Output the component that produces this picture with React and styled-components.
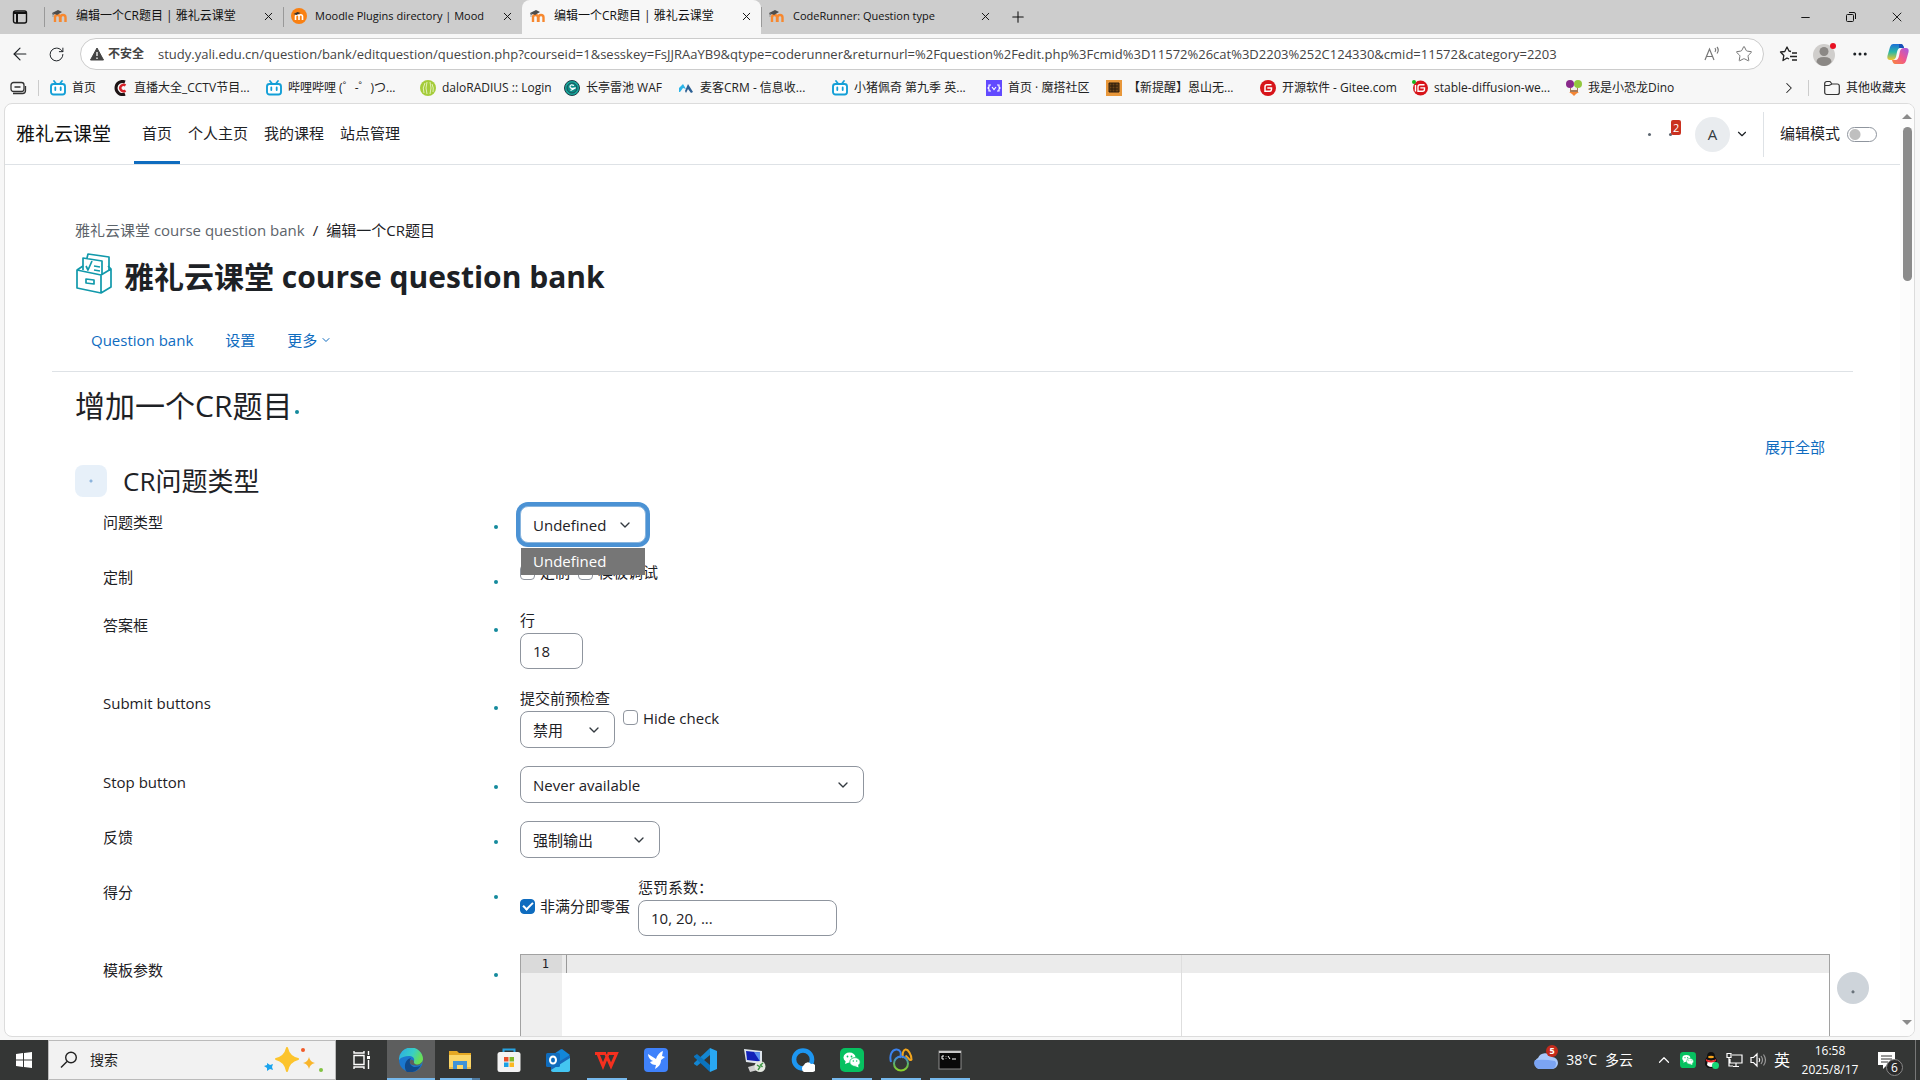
import React, { useState } from "react";
import styled, { createGlobalStyle } from "styled-components";
import {
  ArrowLeft,
  ChevronDown,
  ChevronRight,
  ChevronUp,
  Ellipsis,
  Minus,
  Plus,
  RotateCw,
  Star,
  X,
} from "lucide-react";

const FAVICONS = {
  moodle: (
    <svg width="16" height="16" viewBox="0 0 16 16">
      <path
        d="M3 14V9.500a2.500 2.500 0 0 1 5 0V14M8.500 14V9.500a2.500 2.500 0 0 1 5 0V14"
        fill="none"
        stroke="#f7882f"
        strokeWidth="2.400"
      />
      <path d="M0 5l6-3 4 2-5 3-2-1-2 1z" fill="#4d4d4d" />
      <path d="M1 5v4" stroke="#8a8a8a" strokeWidth="0.800" />
    </svg>
  ),
  moodleOrg: (
    <svg width="16" height="16" viewBox="0 0 16 16">
      <circle cx="8" cy="8" r="8" fill="#f98012" />
      <path
        d="M4.500 12V8.500a1.700 1.700 0 0 1 3.500 0V12M8 12V8.500a1.700 1.700 0 0 1 3.500 0V12"
        fill="none"
        stroke="#fff"
        strokeWidth="1.600"
      />
      <path d="M2.500 6l4-2 3 1-4 2z" fill="#333" />
    </svg>
  ),
  bili: (
    <svg width="16" height="16" viewBox="0 0 16 16">
      <path d="M4 1l2 2.500M12 1l-2 2.500" stroke="#139fd7" strokeWidth="1.700" strokeLinecap="round" />
      <rect x="1" y="4" width="14" height="10.500" rx="2.500" fill="#fff" stroke="#139fd7" strokeWidth="1.900" />
      <path d="M5.300 7.500v2.500M10.700 7.500v2.500" stroke="#139fd7" strokeWidth="1.800" strokeLinecap="round" />
    </svg>
  ),
  cctv: (
    <svg width="16" height="16" viewBox="0 0 16 16" fill="none">
      <path d="M13 2a6.500 6.500 0 1 0 0 12" stroke="#1d1415" strokeWidth="3" />
      <path d="M13.500 5.500a3.200 3.200 0 1 0 0 5" stroke="#d8232a" strokeWidth="2.400" />
    </svg>
  ),
  radius: (
    <svg width="16" height="16" viewBox="0 0 16 16">
      <circle cx="8" cy="8" r="8" fill="#a5cc3a" />
      <path d="M4 13q-2-5 1-10M7 14q-2-6 0-12M10 14q2-6 0-12M13 12q1-4-1-8" fill="none" stroke="#e9f5c6" strokeWidth="0.900" />
    </svg>
  ),
  safeline: (
    <svg width="16" height="16" viewBox="0 0 16 16">
      <circle cx="8" cy="8" r="7.500" fill="#14a79b" stroke="#233b45" />
      <circle cx="8" cy="8" r="5" fill="#0d8c87" stroke="#1e4d56" />
      <path d="M10 5.500q-4-1.500-4 1t4 1.500-3.500 2.500" fill="none" stroke="#fff" strokeWidth="1.200" />
    </svg>
  ),
  mike: (
    <svg width="16" height="16" viewBox="0 0 16 16">
      <path d="M1 12V8l4-4 3 5-3-1-3 4z" fill="#2bb5e9" />
      <path d="M7 11l3-7 5 8-2 1-3-4-2 4z" fill="#2c5f93" />
    </svg>
  ),
  modelscope: (
    <svg width="16" height="16" viewBox="0 0 16 16">
      <rect width="16" height="16" fill="#624aff" />
      <path d="M5 5H3v2l-1 1 1 1v2h2M11 5h2v2l1 1-1 1v2h-2M6 7l2 2.500L10 7" fill="none" stroke="#fff" strokeWidth="1.200" />
    </svg>
  ),
  enshan: (
    <svg width="16" height="16" viewBox="0 0 16 16">
      <rect width="16" height="16" fill="#e8973a" />
      <path d="M3 3h10v9H3zM4 6h8M4 9h8M6 3v9M9 3v9" fill="#6b4316" stroke="#2c1c0c" />
    </svg>
  ),
  gitee: (
    <svg width="16" height="16" viewBox="0 0 16 16">
      <circle cx="8" cy="8" r="8" fill="#d7141a" />
      <path d="M11.500 4.700H7a2 2 0 0 0-2 2v4.600h4.500a2 2 0 0 0 2-2V7.900H7.300" fill="none" stroke="#fff" strokeWidth="1.500" />
    </svg>
  ),
  igitee: (
    <svg width="16" height="16" viewBox="0 0 16 16">
      <circle cx="8.500" cy="8" r="7.500" fill="#d7141a" />
      <path d="M12.500 4.700H8a2 2 0 0 0-2 2v4.600h4.500a2 2 0 0 0 2-2V7.900H8.300M3.500 5v6.500" fill="none" stroke="#fff" strokeWidth="1.400" />
      <circle cx="2" cy="2" r="2" fill="#16b31d" />
    </svg>
  ),
  dino: (
    <svg width="16" height="16" viewBox="0 0 16 16">
      <circle cx="4" cy="4" r="4" fill="#8a2a8c" />
      <circle cx="12" cy="4" r="4" fill="#93c83e" />
      <path d="M4 8h8v4H4z" fill="#a87b57" />
      <path d="M5 8h6v2H5z" fill="#f4efe8" />
      <path d="M3 12h10l-3 2-2 2-2-2z" fill="#f58634" />
    </svg>
  ),
};

const TABS = [
  { icon: "moodle", title: "编辑一个CR题目 | 雅礼云课堂" },
  { icon: "moodleOrg", title: "Moodle Plugins directory | Mood", latin: true },
  { icon: "moodle", title: "编辑一个CR题目 | 雅礼云课堂", active: true },
  { icon: "moodle", title: "CodeRunner: Question type", latin: true },
];

const BOOKMARKS = [
  { icon: "bili", title: "首页", width: 62 },
  { icon: "cctv", title: "直播大全_CCTV节目...", width: 154 },
  { icon: "bili", title: "哔哩哔哩 (゜-゜)つ...", width: 154 },
  { icon: "radius", title: "daloRADIUS :: Login", width: 144 },
  { icon: "safeline", title: "长亭雷池 WAF", width: 114 },
  { icon: "mike", title: "麦客CRM - 信息收...", width: 154 },
  { icon: "bili", title: "小猪佩奇 第九季 英...", width: 154 },
  { icon: "modelscope", title: "首页 · 魔搭社区", width: 120 },
  { icon: "enshan", title: "【新提醒】恩山无...", width: 154 },
  { icon: "gitee", title: "开源软件 - Gitee.com", width: 152 },
  { icon: "igitee", title: "stable-diffusion-we...", width: 154 },
  { icon: "dino", title: "我是小恐龙Dino", width: 130 },
];

const WechatIcon = ({ size }) => (
  <svg width={size} height={size} viewBox="0 0 24 24">
    <rect width="24" height="24" rx="5" fill="#07c160" />
    <ellipse cx="9.500" cy="9.500" rx="6" ry="5" fill="#fff" />
    <path d="M5 16l1-4 4 2z" fill="#fff" />
    <ellipse cx="15" cy="14" rx="5.200" ry="4.400" fill="#fff" stroke="#07c160" strokeWidth="0.800" />
    <path d="M18.500 19.500l-.5-3-3 1.500z" fill="#fff" />
    <circle cx="7.500" cy="8.500" r="0.900" fill="#07c160" />
    <circle cx="11.500" cy="8.500" r="0.900" fill="#07c160" />
    <circle cx="13.300" cy="13" r="0.700" fill="#07c160" />
    <circle cx="16.700" cy="13" r="0.700" fill="#07c160" />
  </svg>
);

const TASKS = [
  {
    name: "任务视图",
    icon: (
      <svg width="24" height="24" viewBox="0 0 24 24" fill="none" stroke="#fff" strokeWidth="1.400">
        <path d="M4 7.500h10v9H4zM4 3v2h10V3M4 21v-2h10v2M18.500 3v4M18.500 12v9" />
        <path d="M17 8h3v3h-3z" fill="#fff" stroke="none" />
      </svg>
    ),
  },
  {
    name: "Microsoft Edge",
    state: "active",
    icon: (
      <svg width="24" height="24" viewBox="0 0 24 24">
        <defs>
          <linearGradient id="edgeTop" x1="0" y1="0" x2="1" y2="0.400">
            <stop offset="0" stopColor="#2aa9e8" />
            <stop offset="0.600" stopColor="#38cfc5" />
            <stop offset="1" stopColor="#6adf54" />
          </linearGradient>
        </defs>
        <circle cx="12" cy="12" r="12" fill="#1b78cf" />
        <path d="M0 12A12 12 0 0 1 24 11c0 4-3 6-6 6s-4-2-3-4c1-3-2-5-5-5-4 0-8 1-10 4z" fill="url(#edgeTop)" />
        <path d="M8 24C4 20 6 11 12 10c-3 4 0 9 4 9 3 0 5-1 6-2-3 6-8 8-14 7z" fill="#114a8b" />
        <path d="M24 12c0 3-3 5.500-6 5.500s-5-1-4-4.500c1 3 3 4 5 3.500s4-2 5-4.500z" fill="#5d5e5e" />
        <path d="M11 13q1-3 4 0c-1 2 0 4 3 4-5 1-8-1-7-4z" fill="#5d5e5e" />
      </svg>
    ),
  },
  {
    name: "文件资源管理器",
    state: "stack",
    icon: (
      <svg width="24" height="24" viewBox="0 0 24 24">
        <path d="M1 3h8l2 2h12v15H1z" fill="#e5a823" />
        <path d="M1 7h22v14H1z" fill="#fbd668" />
        <path d="M5 13h14v8h-4v-4H9v4H5z" fill="#3f93d8" />
        <path d="M1 19h4v2H1zM19 19h4v2h-4z" fill="#e9bc4c" />
      </svg>
    ),
  },
  {
    name: "Microsoft Store",
    icon: (
      <svg width="24" height="24" viewBox="0 0 24 24">
        <path d="M6.500 5V1.500h11V5" fill="none" stroke="#27a3e2" strokeWidth="2" />
        <rect x="0.500" y="4" width="23" height="20" rx="2.500" fill="#f3f3f3" />
        <path d="M7 9h4.500v4.500H7z" fill="#e8502b" />
        <path d="M12.500 9H17v4.500h-4.500z" fill="#80b82a" />
        <path d="M7 14.500h4.500V19H7z" fill="#1aa1e4" />
        <path d="M12.500 14.500H17V19h-4.500z" fill="#fbb921" />
      </svg>
    ),
  },
  {
    name: "Outlook",
    icon: (
      <svg width="24" height="24" viewBox="0 0 24 24">
        <path d="M5 8l10-7 9 7v15H5z" fill="#1767b8" />
        <path d="M8 6l8-5 8 6-10 6z" fill="#1287d9" />
        <path d="M5 22l19-12v12a2 2 0 0 1-2 2H7a2 2 0 0 1-2-2z" fill="#44c5f1" />
        <rect y="5" width="14" height="14" rx="1.500" fill="#0f6cbd" />
        <ellipse cx="7" cy="12" rx="3" ry="3.500" fill="none" stroke="#fff" strokeWidth="2" />
      </svg>
    ),
  },
  {
    name: "WPS Office",
    state: "open",
    icon: (
      <svg width="24" height="24" viewBox="0 0 24 24" fill="none" stroke="#f5301f" strokeWidth="3">
        <path d="M0 5.500h11M3 6l5 12 5-12M11 6.500l5 11.500 5.500-12.500h-9" />
      </svg>
    ),
  },
  {
    name: "Bird",
    icon: (
      <svg width="24" height="24" viewBox="0 0 24 24">
        <rect width="24" height="24" rx="4" fill="#3f82fb" />
        <path d="M4 6l8 5c1-4 4-7 7-8l-1 5 3 1-4 3c0 5-3 7-6 9l1-4c-3 0-5-1-6-3l3-1c-3-1-5-4-5-7z" fill="#fff" />
      </svg>
    ),
  },
  {
    name: "Visual Studio Code",
    icon: (
      <svg width="24" height="24" viewBox="0 0 24 24">
        <path d="M17 0l7 3v18l-7 3z" fill="#29a8f2" />
        <path d="M17 0v7L4 18l-3-2v-1z" fill="#1486d1" />
        <path d="M17 24v-7L4 6 1 8v1z" fill="#0b74be" />
      </svg>
    ),
  },
  {
    name: "远程桌面",
    icon: (
      <svg width="24" height="24" viewBox="0 0 24 24">
        <path d="M2 1l18 2v13L4 14z" fill="#dfe5ec" />
        <path d="M4 3l14 1.500v9L5 12z" fill="#1120b8" />
        <path d="M12 4l6 .5v9z" fill="#5a92ef" />
        <path d="M6 19l11-3 3 5-12 3z" fill="#cfcfcf" />
        <circle cx="18" cy="18.500" r="5.500" fill="#e4e8e0" />
        <path d="M15 17l3 2-2 3M21 15l-2.500 2 2 2" fill="none" stroke="#3a9440" strokeWidth="1.400" />
      </svg>
    ),
  },
  {
    name: "QQ浏览器",
    icon: (
      <svg width="24" height="24" viewBox="0 0 24 24">
        <circle cx="12" cy="11.500" r="9" fill="none" stroke="#1d96f1" strokeWidth="4.600" />
        <path d="M13 24a4 4 0 0 1 0-7 4 4 0 0 1 7-1 4 4 0 0 1 2 8z" fill="#fff" />
      </svg>
    ),
  },
  { name: "微信", state: "open", icon: <WechatIcon size={24} /> },
  {
    name: "Navicat",
    state: "open",
    icon: (
      <svg width="24" height="24" viewBox="0 0 24 24" fill="none" strokeWidth="2">
        <defs>
          <linearGradient id="navicatRing" x1="0" y1="0" x2="0" y2="1">
            <stop offset="0" stopColor="#3b82ee" />
            <stop offset="0.600" stopColor="#63b858" />
            <stop offset="1" stopColor="#8ad02c" />
          </linearGradient>
        </defs>
        <path d="M2 14C0 7 3 2 7 1.500s6 3.500 4 8.500" stroke="#3b82ee" />
        <path d="M14 10c-1-4 0-8 2.500-8.500s6 5 6 10c-2 2-3-2-6-4" stroke="#f4a61d" />
        <circle cx="12" cy="15.500" r="7" stroke="url(#navicatRing)" />
      </svg>
    ),
  },
  {
    name: "命令提示符",
    state: "open",
    icon: (
      <svg width="24" height="24" viewBox="0 0 24 24">
        <rect x="1" y="3" width="22" height="18" fill="#090909" stroke="#8c8c8c" />
        <path d="M1 3h22v2H1z" fill="#c9c9c9" />
        <path d="M6 8H4v3h2M8 8v.5M8 10.500v.5M10 8l2 3M14 11h4" fill="none" stroke="#fff" />
      </svg>
    ),
  },
];

const Row = ({ label, htmlFor, children }) => (
  <FormRow>
    <RowLabel>
      <label htmlFor={htmlFor}>{label}</label>
      <HelpDot type="button" aria-label="帮助" />
    </RowLabel>
    <Controls>{children}</Controls>
  </FormRow>
);

const Select = ({ id, width, focused, options, children }) => (
  <SelectWrap $width={width} $focused={focused}>
    <select id={id}>
      {options.map((option) => (
        <option key={option}>{option}</option>
      ))}
    </select>
    <ChevronDown size={16} strokeWidth={2} />
    {children}
  </SelectWrap>
);

const BrowserChrome = () => (
  <header>
    <TabStrip>
      <TabActions type="button" aria-label="标签页操作">
        <svg width="16" height="16" viewBox="0 0 16 16" fill="none" stroke="#111" strokeWidth="1.400">
          <rect x="1.500" y="2" width="13" height="12" rx="2" />
          <path d="M1.500 4h13M5 5v9" strokeWidth="2" />
        </svg>
      </TabActions>
      {TABS.map((tab, index) => (
        <Tab key={index} $active={tab.active} $latin={tab.latin}>
          {FAVICONS[tab.icon]}
          <span>{tab.title}</span>
          <button type="button" aria-label="关闭标签页">
            <X size={13} strokeWidth={1.8} />
          </button>
        </Tab>
      ))}
      <IconButton type="button" aria-label="新建标签页" $width={36}>
        <Plus size={18} strokeWidth={1.4} />
      </IconButton>
      <WindowButtons>
        <IconButton type="button" aria-label="最小化" $width={46}>
          <Minus size={13} strokeWidth={1.8} />
        </IconButton>
        <IconButton type="button" aria-label="还原" $width={46}>
          <svg width="12" height="12" viewBox="0 0 12 12" fill="none" stroke="#111">
            <rect x="1.500" y="3.500" width="7" height="7" rx="1" />
            <path d="M4 1.500h5a1.500 1.500 0 0 1 1.500 1.500v5" />
          </svg>
        </IconButton>
        <IconButton type="button" aria-label="关闭" $width={46}>
          <X size={16} strokeWidth={1.4} />
        </IconButton>
      </WindowButtons>
    </TabStrip>

    <Toolbar>
      <IconButton type="button" aria-label="后退" $width={36}>
        <ArrowLeft size={20} strokeWidth={1.4} />
      </IconButton>
      <IconButton type="button" aria-label="刷新" $width={36}>
        <RotateCw size={17} strokeWidth={1.4} />
      </IconButton>
      <AddressBar>
        <svg width="14" height="14" viewBox="0 0 14 14">
          <path d="M7 1l6.500 12H.5z" fill="#444" stroke="#444" strokeLinejoin="round" />
          <path d="M7 5v4M7 10.500V12" stroke="#fff" strokeWidth="1.300" />
        </svg>
        <strong>不安全</strong>
        <input
          aria-label="地址"
          readOnly
          value="study.yali.edu.cn/question/bank/editquestion/question.php?courseid=1&sesskey=FsJJRAaYB9&qtype=coderunner&returnurl=%2Fquestion%2Fedit.php%3Fcmid%3D11572%26cat%3D2203%252C124330&cmid=11572&category=2203"
        />
        <svg width="18" height="18" viewBox="0 0 18 18" fill="none" stroke="#777" strokeWidth="1.200">
          <path d="M2 15L6.500 4 11 15M3.500 11.500h6M12 3q1.500 2 0 4M14 2q2.500 3 0 6.500" />
        </svg>
        <Star size={18} strokeWidth={1.2} color="#666" />
      </AddressBar>
      <IconButton type="button" aria-label="收藏夹" $width={36}>
        <svg width="19" height="19" viewBox="0 0 19 19" fill="none" stroke="#222" strokeWidth="1.300" strokeLinejoin="round">
          <path d="M12 6.500L10 6 8 2 5.800 6.500 1.500 7 4.800 10.500 4 15.500 8 13l2 1" />
          <path d="M13 8h5M11 11.500h7M13 15h5" />
        </svg>
      </IconButton>
      <IconButton type="button" aria-label="个人资料" $width={36}>
        <svg width="24" height="24" viewBox="0 0 24 24">
          <circle cx="12" cy="13" r="11" fill="#d0cecc" />
          <circle cx="12" cy="9.500" r="4.500" fill="#8b8885" />
          <path d="M4.500 20q0-5 7.500-5t7.500 5q-3 4-7.500 4t-7.500-4z" fill="#8b8885" />
          <circle cx="21" cy="4" r="3" fill="#e81123" />
        </svg>
      </IconButton>
      <IconButton type="button" aria-label="设置及其他" $width={36}>
        <Ellipsis size={18} />
      </IconButton>
      <IconButton type="button" aria-label="Copilot" $width={40}>
        <svg width="22" height="22" viewBox="0 0 22 22">
          <defs>
            <linearGradient id="copilotA" x1="0" y1="0" x2="0" y2="1">
              <stop offset="0" stopColor="#1b6fd8" />
              <stop offset="0.500" stopColor="#29b8a6" />
              <stop offset="1" stopColor="#f4c729" />
            </linearGradient>
            <linearGradient id="copilotB" x1="1" y1="0" x2="0" y2="1">
              <stop offset="0" stopColor="#a259e6" />
              <stop offset="0.500" stopColor="#f0578d" />
              <stop offset="1" stopColor="#f9893a" />
            </linearGradient>
          </defs>
          <path d="M6 1h8q2 0 3 4h-4q-2 0-3 4l-1 5q-1 3-4 3H3q-4 0-2-6l2-7q1-3 3-3z" fill="url(#copilotA)" />
          <path d="M16 21H8q-2 0-3-4h4q2 0 3-4l1-5q1-3 4-3h2q4 0 2 6l-2 7q-1 3-3 3z" fill="url(#copilotB)" />
          <path d="M12 1h2q2 0 3 4h-5z" fill="#1750b8" />
        </svg>
      </IconButton>
    </Toolbar>

    <BookmarkBar>
      <IconButton type="button" aria-label="工作区" $width={36}>
        <svg width="18" height="16" viewBox="0 0 18 16" fill="none" stroke="#333" strokeWidth="1.300">
          <rect x="2" y="2.500" width="13" height="9" rx="2.500" />
          <path d="M5.500 7h6M4 13.500h9.500a3 3 0 0 0 3-3V6" />
        </svg>
      </IconButton>
      <BarDivider />
      <Bookmarks>
        {BOOKMARKS.map((mark, index) => (
          <Bookmark key={index} href="#" $width={mark.width}>
            {FAVICONS[mark.icon]}
            <span>{mark.title}</span>
          </Bookmark>
        ))}
      </Bookmarks>
      <IconButton type="button" aria-label="更多收藏" $width={34}>
        <ChevronRight size={18} strokeWidth={1.4} />
      </IconButton>
      <BarDivider />
      <OtherBookmarks href="#">
        <svg width="16" height="16" viewBox="0 0 16 16" fill="none" stroke="#333" strokeWidth="1.200">
          <path d="M.7 12.500v-9a2 2 0 0 1 2-2H6l2 2.500h5.300a2 2 0 0 1 2 2v6.500a2 2 0 0 1-2 2H2.700a2 2 0 0 1-2-2zM.7 5.500H5L8 4" />
        </svg>
        <span>其他收藏夹</span>
      </OtherBookmarks>
    </BookmarkBar>
  </header>
);

const SiteNav = () => (
  <Navbar>
    <Brand href="#">雅礼云课堂</Brand>
    <NavLink href="#" $active>
      首页
    </NavLink>
    <NavLink href="#">个人主页</NavLink>
    <NavLink href="#">我的课程</NavLink>
    <NavLink href="#">站点管理</NavLink>
    <NavTools>
      <NavDot type="button" aria-label="通知" />
      <NavDot type="button" aria-label="消息">
        <Badge>2</Badge>
      </NavDot>
      <UserMenu type="button">
        <span>A</span>
        <ChevronDown size={14} />
      </UserMenu>
      <EditMode>
        <label htmlFor="editmode">编辑模式</label>
        <Switch id="editmode" type="checkbox" role="switch" />
      </EditMode>
    </NavTools>
  </Navbar>
);

const QuestionForm = () => {
  const [custom, setCustom] = useState(false);
  const [debug, setDebug] = useState(false);
  const [hideCheck, setHideCheck] = useState(false);
  const [allOrNothing, setAllOrNothing] = useState(true);

  return (
    <form>
      <Row label="问题类型" htmlFor="qtype">
        <Select id="qtype" width={126} focused options={["Undefined"]}>
          <OptionList>
            <li>Undefined</li>
          </OptionList>
        </Select>
      </Row>
      <Row label="定制">
        <CheckLine>
          <Check>
            <input type="checkbox" checked={custom} onChange={(e) => setCustom(e.target.checked)} />
            定制
          </Check>
          <Check>
            <input type="checkbox" checked={debug} onChange={(e) => setDebug(e.target.checked)} />
            模板调试
          </Check>
        </CheckLine>
      </Row>
      <Row label="答案框">
        <Field>
          <label htmlFor="lines">行</label>
          <TextInput id="lines" $width={63} defaultValue="18" />
        </Field>
      </Row>
      <Row label="Submit buttons">
        <Field>
          <label htmlFor="precheck">提交前预检查</label>
          <Select id="precheck" width={95} options={["禁用"]} />
        </Field>
        <Check>
          <input type="checkbox" checked={hideCheck} onChange={(e) => setHideCheck(e.target.checked)} />
          Hide check
        </Check>
      </Row>
      <Row label="Stop button" htmlFor="giveup">
        <Select id="giveup" width={344} options={["Never available"]} />
      </Row>
      <Row label="反馈" htmlFor="feedback">
        <Select id="feedback" width={140} options={["强制输出"]} />
      </Row>
      <Row label="得分">
        <Check>
          <input type="checkbox" checked={allOrNothing} onChange={(e) => setAllOrNothing(e.target.checked)} />
          非满分即零蛋
        </Check>
        <Field>
          <label htmlFor="penalty">惩罚系数：</label>
          <TextInput id="penalty" $width={199} defaultValue="10, 20, ..." />
        </Field>
      </Row>
      <Row label="模板参数" htmlFor="params">
        <Editor>
          <Gutter>1</Gutter>
          <Caret />
          <textarea id="params" />
        </Editor>
      </Row>
    </form>
  );
};

const Taskbar = () => (
  <TaskbarWrap>
    <StartButton type="button" aria-label="开始">
      <svg width="16" height="16" viewBox="0 0 16 16" fill="#fff">
        <path d="M0 2l7-1v6.500H0zM8 1l8-1v7.500H8zM0 8.500h7V15l-7-1zM8 8.500h8V16l-8-1z" />
      </svg>
    </StartButton>
    <SearchBox>
      <svg width="18" height="18" viewBox="0 0 18 18" fill="none" stroke="#222" strokeWidth="1.400">
        <circle cx="11" cy="6.500" r="5.300" />
        <path d="M7 10.500L1 16.500" />
      </svg>
      <input aria-label="搜索" placeholder="搜索" />
      <svg width="62" height="26" viewBox="0 0 62 26">
        <path d="M24 1q2 9 11 11-9 2-11 12-2-10-11-12 9-2 11-11z" fill="#fcc42d" stroke="#fcc42d" strokeWidth="2" strokeLinejoin="round" />
        <path d="M46 10q1 5 6 6-5 1-6 6-1-5-6-6 5-1 6-6z" fill="#f9b52b" />
        <path d="M4 16l3 2 3-1-1 3 1 3-3-1-3 2v-3l-3-2 3-1z" fill="#1ba4ed" />
        <circle cx="40" cy="3" r="2" fill="#f15a29" />
        <circle cx="58" cy="23" r="2" fill="#82c341" />
      </svg>
    </SearchBox>
    <Tasks>
      {TASKS.map((task) => (
        <Task key={task.name} type="button" aria-label={task.name} $state={task.state}>
          {task.icon}
        </Task>
      ))}
    </Tasks>
    <Weather type="button">
      <WeatherIcon>
        <svg width="25" height="18" viewBox="0 0 25 18">
          <path d="M6 18a6 6 0 0 1-1-11 8 8 0 0 1 14-1 6 6 0 0 1 0 12z" fill="#a9c8fb" />
          <path d="M6 18a6 6 0 0 1-4-9q10-1 20 1 3 4-2 8z" fill="#7ba4f3" />
        </svg>
        <i>5</i>
      </WeatherIcon>
      <span>38°C</span>
      <span>多云</span>
    </Weather>
    <Tray>
      <ChevronUp size={18} strokeWidth={1.6} />
      <WechatIcon size={16} />
      <svg width="16" height="17" viewBox="0 0 16 17">
        <path d="M2 13q0-7 2-8 0-5 4-5t4 5q2 1 2 8l-3 3H5z" fill="#111" />
        <path d="M5 8q3 2 6 0l1 5q-4 4-8 0z" fill="#fff" />
        <path d="M3 7q5 3 10 0v2q-5 3-10 0z" fill="#e4252a" />
        <ellipse cx="8" cy="5" rx="3" ry="1.300" fill="#f9a51a" />
        <circle cx="12.500" cy="13.500" r="3.500" fill="#16d978" />
      </svg>
      <svg width="17" height="16" viewBox="0 0 17 16" fill="none" stroke="#fff" strokeWidth="1.200">
        <path d="M6 3h10v8H4V7M7 14.500h6M10 11v3M1 1.500h4v4H1zM3 6v8h4" />
      </svg>
      <svg width="17" height="16" viewBox="0 0 17 16" fill="none" stroke="#fff" strokeWidth="1.200">
        <path d="M1 5.500h2.500L7 2v12l-3.500-3.500H1zM9 6q1.500 2 0 4" />
        <path d="M11 4q3 4 0 8M13.500 2.500q4 5.500 0 11" stroke="#999" />
      </svg>
      <Ime>英</Ime>
    </Tray>
    <Clock>
      <time>16:58</time>
      <time>2025/8/17</time>
    </Clock>
    <Notices type="button" aria-label="通知中心">
      <svg width="17" height="17" viewBox="0 0 17 17">
        <path d="M0 0h17v13H9l-4 4v-4H0z" fill="#fff" />
        <path d="M3 4h11M3 7h11M3 10h7" stroke="#333" />
      </svg>
      <i>6</i>
    </Notices>
  </TaskbarWrap>
);

const App = () => {
  return (
    <Desktop>
      <GlobalStyle />
      <BrowserChrome />
      <Viewport>
        <Page>
          <SiteNav />
          <Main>
            <Breadcrumb aria-label="导航栏">
              <a href="#">雅礼云课堂 course question bank</a>
              <span>/</span>
              <span>编辑一个CR题目</span>
            </Breadcrumb>
            <TitleRow>
              <svg width="38" height="42" viewBox="0 0 38 42" fill="none" stroke="#1199ab" strokeWidth="1.700" strokeLinejoin="round">
                <path d="M2 17l24 5v18L2 35zM26 22l10-6v18l-10 6M2 17l6-4M36 16l-3-3" />
                <path d="M8 17V5l19 3v13M12 5l1-4 21 3v14M11 26l8 1v4l-8-1z" />
                <path d="M11 13l2 4 4-9M19 13l6 1M19 17l6 1" />
              </svg>
              <h1>雅礼云课堂 course question bank</h1>
            </TitleRow>
            <SubNav>
              <a href="#">Question bank</a>
              <a href="#">设置</a>
              <a href="#">
                更多
                <ChevronDown size={12} />
              </a>
            </SubNav>
            <FormTitle>
              <h2>增加一个CR题目</h2>
              <HelpDot type="button" aria-label="帮助" />
            </FormTitle>
            <ExpandAll href="#">展开全部</ExpandAll>
            <Section>
              <button type="button" aria-label="折叠" />
              <h3>CR问题类型</h3>
            </Section>
            <QuestionForm />
          </Main>
        </Page>
        <Scrollbar>
          <Arrow />
          <Thumb />
          <Arrow $down />
        </Scrollbar>
        <FooterButton type="button" aria-label="显示页脚" />
      </Viewport>
      <Taskbar />
    </Desktop>
  );
};

export default App;

const GlobalStyle = createGlobalStyle`
  * {
    box-sizing: border-box;
  }
  body {
    margin: 0;
    overflow: hidden;
    color: #1d2125;
    font-family: "Open Sans", "Noto Sans CJK SC", sans-serif;
    font-size: 15px;
    line-height: 22px;
  }
  button, input, select, textarea {
    font: inherit;
    color: inherit;
  }
  button {
    padding: 0;
    border: none;
    background: none;
  }
  a {
    color: #0f6cbf;
    text-decoration: none;
  }
  h1, h2, h3, ul {
    margin: 0;
    padding: 0;
  }
  i {
    font-style: normal;
  }
  svg {
    flex: none;
  }
`;

const Desktop = styled.div`
  height: 100vh;
  display: flex;
  flex-direction: column;
  background: #f7f7f7;
`;

const IconButton = styled.button`
  width: ${({ $width }) => $width}px;
  height: 100%;
  flex: none;
  display: flex;
  align-items: center;
  justify-content: center;
`;

const TabStrip = styled.div`
  height: 34px;
  display: flex;
  background: #cdcdcd;
  font-size: 12px;
  color: #111;
`;

const TabActions = styled(IconButton)`
  width: 44px;
  padding-right: 4px;
`;

const Tab = styled.div`
  width: 239px;
  display: flex;
  align-items: center;
  gap: 8px;
  padding: 0 8px 2px;
  border-radius: 8px 8px 0 0;
  background: ${({ $active }) =>
    $active
      ? "#f7f7f7"
      : "linear-gradient(#999, #999) 0 50% / 1px 20px no-repeat"};
  span {
    flex: 1;
    overflow: hidden;
    white-space: nowrap;
    font-size: ${({ $latin }) => ($latin ? 11 : 12)}px;
  }
  button {
    display: flex;
  }
`;

const WindowButtons = styled.div`
  display: flex;
  margin-left: auto;
`;

const Toolbar = styled.div`
  height: 40px;
  display: flex;
  align-items: center;
  padding: 0 2px;
`;

const AddressBar = styled.div`
  flex: 1;
  height: 32px;
  display: flex;
  align-items: center;
  margin: 0 6px;
  padding: 0 10px 0 9px;
  border: 1px solid #ccc;
  border-radius: 16px;
  background: #fff;
  strong {
    margin: 0 14px 0 4px;
    font-size: 12px;
    color: #444;
  }
  input {
    flex: 1;
    min-width: 0;
    padding: 0;
    border: none;
    outline: none;
    background: none;
    font-size: 13px;
    color: #444;
  }
  svg:last-child {
    margin-left: 14px;
  }
`;

const BookmarkBar = styled.div`
  height: 29px;
  display: flex;
  align-items: center;
  padding: 0 14px 2px 0;
  font-size: 12px;
  color: #222;
`;

const BarDivider = styled.div`
  width: 1px;
  height: 16px;
  margin: 0 5px 0 2px;
  background: #ccc;
`;

const Bookmarks = styled.nav`
  flex: 1;
  min-width: 0;
  display: flex;
  overflow: hidden;
  padding-left: 6px;
`;

const Bookmark = styled.a`
  width: ${({ $width }) => $width}px;
  flex: none;
  display: flex;
  align-items: center;
  gap: 6px;
  white-space: nowrap;
  color: #222;
`;

const OtherBookmarks = styled.a`
  display: flex;
  align-items: center;
  gap: 6px;
  padding-left: 10px;
  color: #222;
`;

const Viewport = styled.div`
  position: relative;
  flex: 1;
  min-height: 0;
  display: flex;
  margin: 0 5px 3px 4px;
  overflow: hidden;
  border: 1px solid #dcdcdc;
  border-radius: 8px;
  background: #fff;
`;

const Page = styled.div`
  flex: 1;
  min-width: 0;
  overflow: hidden;
`;

const Navbar = styled.nav`
  height: 61px;
  display: flex;
  align-items: center;
  padding-left: 11px;
  border-bottom: 1px solid #dee2e6;
`;

const Brand = styled.a`
  margin-right: 23px;
  font-size: 19px;
  color: #111;
`;

const NavLink = styled.a`
  height: 60px;
  padding: 0 8px;
  line-height: 58px;
  color: #1d2125;
  box-shadow: ${({ $active }) => ($active ? "inset 0 -3px #0f6cbf" : "none")};
`;

const NavTools = styled.div`
  height: 100%;
  display: flex;
  align-items: center;
  margin-left: auto;
  padding-right: 23px;
`;

const NavDot = styled.button`
  position: relative;
  width: 3px;
  height: 3px;
  margin-right: 18px;
  border-radius: 50%;
  background: #5c6670;
`;

const Badge = styled.span`
  position: absolute;
  left: 2px;
  bottom: 1px;
  padding: 0 2px;
  border-radius: 2px;
  background: #ca3120;
  color: #fff;
  font-size: 11px;
  line-height: 15px;
`;

const UserMenu = styled.button`
  display: flex;
  align-items: center;
  gap: 5px;
  margin: 0 14px 0 5px;
  span {
    width: 35px;
    height: 35px;
    border-radius: 50%;
    background: #e9ecef;
    line-height: 34px;
    color: #343a40;
  }
`;

const EditMode = styled.div`
  height: 45px;
  display: flex;
  align-items: center;
  gap: 7px;
  padding-left: 16px;
  border-left: 1px solid #dee2e6;
  label {
    padding-bottom: 2px;
  }
`;

const Switch = styled.input`
  appearance: none;
  width: 30px;
  height: 15px;
  margin: 0;
  border: 1px solid #8f959e;
  border-radius: 8px;
  background: radial-gradient(circle at 7px 50%, #bfbfbf 5px, transparent 6px);
`;

const Main = styled.main`
  padding: 54px 70px 0;
`;

const Breadcrumb = styled.nav`
  display: flex;
  gap: 8px;
  a {
    color: #5d646b;
  }
`;

const TitleRow = styled.div`
  height: 46px;
  display: flex;
  align-items: center;
  gap: 11px;
  margin-top: 13px;
  h1 {
    font-size: 30px;
    line-height: 36px;
  }
  svg {
    margin-bottom: 6px;
  }
`;

const SubNav = styled.nav`
  display: flex;
  gap: 32px;
  margin: 0 -23px;
  padding: 29px 39px 20px;
  border-bottom: 1px solid #dee2e6;
  a {
    display: flex;
    align-items: center;
    gap: 3px;
  }
`;

const HelpDot = styled.button`
  width: 4px;
  height: 4px;
  border-radius: 50%;
  background: #148a9c;
`;

const FormTitle = styled.div`
  display: flex;
  align-items: center;
  gap: 3px;
  margin-top: 16px;
  h2 {
    font-size: 30px;
    font-weight: 400;
    line-height: 36px;
  }
  button {
    margin-top: 12px;
  }
`;

const ExpandAll = styled.a`
  display: block;
  margin-top: 12px;
  padding-right: 5px;
  text-align: right;
`;

const Section = styled.div`
  display: flex;
  align-items: center;
  gap: 16px;
  margin: 7px 0 9px;
  button {
    width: 32px;
    height: 32px;
    border-radius: 8px;
    background: radial-gradient(circle, #8db4dc 1px, #e7f0f9 2px);
  }
  h3 {
    font-size: 26px;
    font-weight: 400;
    line-height: 32px;
  }
`;

const FormRow = styled.div`
  display: grid;
  grid-template-columns: 397px minmax(0, 1fr);
  gap: 20px;
  margin: 0 0 18px 28px;
`;

const RowLabel = styled.div`
  display: flex;
  justify-content: space-between;
  padding-top: 5px;
  button {
    margin-top: 14px;
    margin-right: 2px;
  }
`;

const Controls = styled.div`
  display: flex;
  align-items: center;
  gap: 8px;
`;

const CheckLine = styled.div`
  display: flex;
  gap: 8px;
  padding-bottom: 8px;
`;

const Check = styled.label`
  display: flex;
  align-items: center;
  gap: 5px;
  input {
    appearance: none;
    width: 15px;
    height: 15px;
    display: grid;
    place-items: center;
    margin: 0;
    border: 1px solid #8f959e;
    border-radius: 4px;
  }
  input:checked {
    border-color: #0f6cbf;
    background: #0f6cbf;
  }
  input:checked::after {
    content: "";
    width: 8px;
    height: 4px;
    margin-bottom: 3px;
    border: solid #fff;
    border-width: 0 0 2px 2px;
    transform: rotate(-45deg);
  }
`;

const Field = styled.div`
  display: flex;
  flex-direction: column;
  gap: 2px;
`;

const TextInput = styled.input`
  width: ${({ $width }) => $width}px;
  height: 36px;
  padding: 0 12px;
  border: 1px solid #8f959e;
  border-radius: 8px;
`;

const SelectWrap = styled.div`
  position: relative;
  width: ${({ $width }) => $width}px;
  display: grid;
  align-items: center;
  select {
    grid-area: 1 / 1;
    appearance: none;
    height: 37px;
    padding: 0 12px;
    border: 1px solid ${({ $focused }) => ($focused ? "#89b5de" : "#8f959e")};
    border-radius: 8px;
    background: #fff;
    box-shadow: ${({ $focused }) => ($focused ? "0 0 0 4px #4b92d4" : "none")};
  }
  svg {
    grid-area: 1 / 1;
    justify-self: end;
    margin-right: 13px;
    pointer-events: none;
    color: #343a40;
  }
`;

const OptionList = styled.ul`
  position: absolute;
  z-index: 1;
  top: 42px;
  left: 1px;
  right: 1px;
  padding: 0 12px;
  background: #767676;
  color: #fff;
  line-height: 27px;
  list-style: none;
`;

const Editor = styled.div`
  flex: 1;
  min-height: 200px;
  display: grid;
  grid-template-columns: 41px 5px 1fr;
  border: 1px solid #a2a2a2;
  background: linear-gradient(#dedede, #dedede) 660px 0 / 1px 100% no-repeat,
    linear-gradient(#ebebeb, #ebebeb) 0 0 / 100% 18px no-repeat;
  textarea {
    padding: 0;
    border: none;
    outline: none;
    resize: none;
    background: none;
    line-height: 18px;
  }
`;

const Gutter = styled.div`
  padding-right: 13px;
  background: linear-gradient(#dadada 18px, #efefef 18px);
  font-family: "DejaVu Sans Mono", monospace;
  font-size: 12px;
  line-height: 18px;
  text-align: right;
`;

const Caret = styled.div`
  height: 18px;
  border-right: 1px solid #999;
`;

const Scrollbar = styled.div`
  width: 14px;
  display: flex;
  flex-direction: column;
  align-items: center;
  padding: 10px 0 11px;
  background: #fcfcfc;
`;

const Arrow = styled.i`
  border: 5px solid transparent;
  border-width: ${({ $down }) => ($down ? "5px 5px 0" : "0 5px 5px")};
  border-color: ${({ $down }) =>
    $down ? "#8b8b8b transparent transparent" : "transparent transparent #8b8b8b"};
  margin-top: ${({ $down }) => ($down ? "auto" : 0)};
`;

const Thumb = styled.div`
  width: 9px;
  height: 154px;
  margin-top: 8px;
  border-radius: 5px;
  background: #8b8b8b;
`;

const FooterButton = styled.button`
  position: absolute;
  right: 45px;
  bottom: 32px;
  width: 32px;
  height: 32px;
  border-radius: 50%;
  background: radial-gradient(circle at 50% 62%, #6a737b 1px, #ced4da 2px);
`;

const TaskbarWrap = styled.footer`
  height: 40px;
  flex: none;
  display: flex;
  background: #343635;
  color: #fff;
`;

const StartButton = styled(IconButton)`
  width: 48px;
`;

const SearchBox = styled.div`
  width: 288px;
  display: flex;
  align-items: center;
  gap: 10px;
  padding: 0 10px 0 11px;
  border: 1px solid #bbb;
  background: #f2f2f2;
  input {
    flex: 1;
    min-width: 0;
    border: none;
    outline: none;
    background: none;
    font-size: 14px;
  }
  input::placeholder {
    color: #222;
  }
`;

const Tasks = styled.div`
  flex: 1;
  display: flex;
  gap: 1px;
  padding-left: 2px;
`;

const taskLine = {
  active: "linear-gradient(#76b9ed, #76b9ed) 0 100% / 100% 2px no-repeat #5d5e5e",
  open: "linear-gradient(#76b9ed, #76b9ed) 0 100% / 100% 2px no-repeat",
  stack:
    "linear-gradient(90deg, #76b9ed 80%, #4f7ba0 80%) 0 100% / 100% 2px no-repeat",
};

const Task = styled.button`
  width: ${({ $state }) => ($state === "open" || $state === "stack" ? 40 : 48)}px;
  margin: 0 ${({ $state }) => ($state === "open" || $state === "stack" ? 4 : 0)}px;
  display: flex;
  align-items: center;
  justify-content: center;
  background: ${({ $state }) => taskLine[$state] || "none"};
`;

const Weather = styled.button`
  display: flex;
  align-items: center;
  gap: 8px;
  margin-right: 22px;
  font-size: 14px;
`;

const WeatherIcon = styled.span`
  position: relative;
  height: 18px;
  display: flex;
  i {
    position: absolute;
    top: -6px;
    right: 0;
    width: 12px;
    height: 12px;
    border-radius: 50%;
    background: #c42b1c;
    font-size: 9px;
    font-weight: 700;
    line-height: 12px;
  }
`;

const Tray = styled.div`
  display: flex;
  align-items: center;
  gap: 7px;
`;

const Ime = styled.span`
  font-size: 16px;
`;

const Clock = styled.div`
  width: 80px;
  display: flex;
  flex-direction: column;
  justify-content: center;
  text-align: center;
  font-size: 12px;
  line-height: 19px;
`;

const Notices = styled.button`
  position: relative;
  width: 46px;
  margin-right: 4px;
  padding-right: 12px;
  display: flex;
  align-items: center;
  justify-content: center;
  border-right: 1px solid #777;
  i {
    position: absolute;
    right: 12px;
    bottom: 4px;
    width: 17px;
    height: 17px;
    border: 1px solid #888;
    border-radius: 50%;
    background: #2a2a2a;
    font-size: 12px;
    line-height: 15px;
  }
`;
